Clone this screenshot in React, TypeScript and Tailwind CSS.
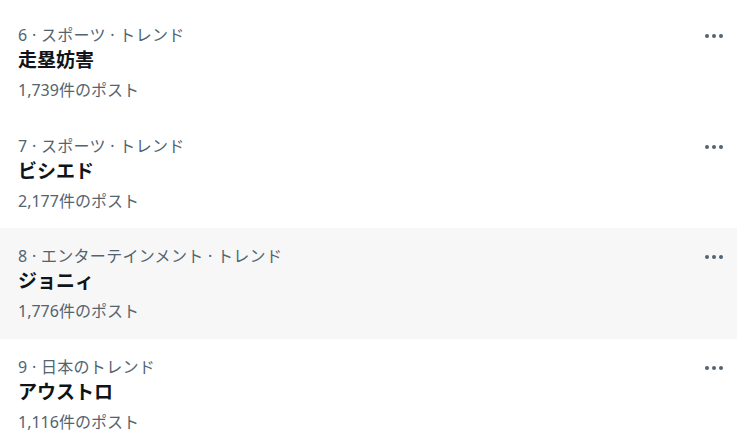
import React from "react";

const trends = [
  { meta: "6 · スポーツ · トレンド", title: "走塁妨害", count: "1,739件のポスト", hover: false },
  { meta: "7 · スポーツ · トレンド", title: "ビシエド", count: "2,177件のポスト", hover: false },
  { meta: "8 · エンターテインメント · トレンド", title: "ジョニィ", count: "1,776件のポスト", hover: true },
  { meta: "9 · 日本のトレンド", title: "アウストロ", count: "1,116件のポスト", hover: false },
];

function Dots() {
  return (
    <svg width="20" height="6" viewBox="0 0 20 6" className="text-[#536471]">
      <circle cx="3" cy="3" r="2" fill="currentColor" />
      <circle cx="10" cy="3" r="2" fill="currentColor" />
      <circle cx="17" cy="3" r="2" fill="currentColor" />
    </svg>
  );
}

export default function App() {
  return (
    <div
      className="w-[737px] h-[432px] overflow-hidden bg-white pt-[7px]"
      style={{ fontFamily: '"Noto Sans", "Noto Sans CJK JP", sans-serif' }}
    >
      {trends.map((t, i) => (
        <div
          key={i}
          className={`flex h-[110.5px] pl-[18px] pr-[13px] pt-4 ${t.hover ? "bg-[#f7f7f7]" : "bg-white"}`}
        >
          <div className="flex-1 flex flex-col">
            <div className="text-[16px] leading-6 tracking-[0.3px] text-[#536471]">{t.meta}</div>
            <div className="text-[19px] leading-[26px] font-bold text-[#0f1419]">{t.title}</div>
            <div className="text-[16px] leading-[34px] text-[#536471]">{t.count}</div>
          </div>
          <div className="flex items-start pt-[10px]">
            <Dots />
          </div>
        </div>
      ))}
    </div>
  );
}
